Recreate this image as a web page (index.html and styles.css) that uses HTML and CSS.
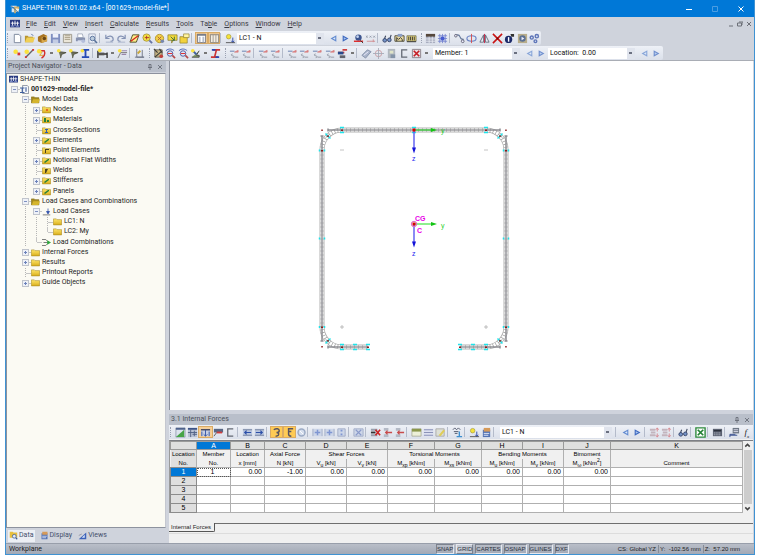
FILE: index.html
```html
<!DOCTYPE html>
<html lang="en">
<head>
<meta charset="utf-8">
<title>SHAPE-THIN</title>
<link rel="stylesheet" href="styles.css">
</head>
<body>
<svg class="defs" aria-hidden="true">
  <defs>
  <linearGradient id="fold" x1="0" y1="0" x2="0" y2="1"><stop offset="0" stop-color="#ffe66b"/><stop offset="1" stop-color="#d9ae1c"/></linearGradient>
  <symbol id="app" viewBox="0 0 12 12"><path d="M0 1h12v9H0z" fill="#293a80"/><path d="M1 5h10M3 3v5M6 2v6M9 3v5" stroke="#fff" stroke-width="1"/><path d="M1 8.500h4M7 8.500h4" stroke="#9fb1e8"/></symbol>
  <symbol id="applogo" viewBox="0 0 12 12"><path d="M1 2h7v2H1zM2 5h3v5H2z" fill="#d8e4ee"/><path d="M5 3h6v3H7v5H5z" fill="#d2b06a"/><path d="M7 5l4 1-1 4-3-1z" fill="#f4f0df"/><path d="M1 2l9 8" stroke="#466a8c"/></symbol>
  <symbol id="new" viewBox="0 0 12 12"><path d="M2.500 1.500h5l2 2v7h-7z" fill="#fff" stroke="#78849a"/></symbol>
  <symbol id="open" viewBox="0 0 12 12"><path d="M1 3h3l1 1h5v6H1z" fill="#b89530"/><path d="M3 5h9l-2 5H1z" fill="#f0cf55"/><path d="M8 1l2 2" stroke="#46649c"/></symbol>
  <symbol id="book" viewBox="0 0 12 12"><path d="M1 4l6-3 4 2v6l-6 2-4-2z" fill="#a87422"/><path d="M5 5l6-2v6l-6 2z" fill="#d9a94c"/><circle cx="8" cy="6" r="2" fill="#6a4716"/></symbol>
  <symbol id="save" viewBox="0 0 12 12"><path d="M1 1h10v10H1z" fill="#7f8fc0"/><path d="M3 1h6v4H3z" fill="#eef2fb"/><path d="M3 7h6v4H3z" fill="#c3cce4"/></symbol>
  <symbol id="list" viewBox="0 0 12 12"><path d="M1.500 1.500h9v9h-9z" fill="#ebe6d8" stroke="#9c988c"/><path d="M3 3h6M3 5h6M3 7h6" stroke="#a59d86"/></symbol>
  <symbol id="print" viewBox="0 0 12 12"><path d="M3 1h5l1 4H3z" fill="#fff" stroke="#8791a8" stroke-width=".7"/><path d="M1 5h10v4H1z" fill="#8792b0"/><path d="M3 8h6v3H3z" fill="#dde2ef"/><circle cx="9" cy="9" r="2" fill="#b4bedb"/></symbol>
  <symbol id="preview" viewBox="0 0 12 12"><path d="M2 1h7v10H2z" fill="#eef1f8" stroke="#8f99b2" stroke-width=".8"/><circle cx="6" cy="6" r="2.500" fill="#bcd" stroke="#56709a"/><path d="M8 8l3 3" stroke="#56709a" stroke-width="1.500"/></symbol>
  <symbol id="undo" viewBox="0 0 12 12"><path d="M2 2v4h4M2 6c3-4 8-3 8 1 0 2-2 2-3 2" fill="none" stroke="#8492b4" stroke-width="1.300"/><path d="M2 10h8" stroke="#a8b2cb"/></symbol>
  <symbol id="redo" viewBox="0 0 12 12"><path d="M10 2v4H6M10 6C7 2 2 3 2 7c0 2 2 2 3 2" fill="none" stroke="#8492b4" stroke-width="1.300"/><path d="M2 10h8" stroke="#a8b2cb"/></symbol>
  <symbol id="plane" viewBox="0 0 12 12"><path d="M4 2h7L8 10H1z" fill="#fff08a" stroke="#4d4d28"/><path d="M2 9l8-6" stroke="#d52020" stroke-width="1.300"/></symbol>
  <symbol id="zoomy" viewBox="0 0 12 12"><circle cx="5" cy="5" r="4" fill="#f3df45" stroke="#a08b2a" stroke-width=".8"/><path d="M3 5h5M5 3v4" stroke="#b03a2a"/><path d="M8 8l3 3" stroke="#6674a4" stroke-width="2"/></symbol>
  <symbol id="rot" viewBox="0 0 12 12"><circle cx="6" cy="6" r="4.500" fill="#f3cf45" stroke="#b0942c"/><path d="M4 4l4 4M8 4L4 8" stroke="#a8603f"/><circle cx="9" cy="9" r="2" fill="#7788b0"/></symbol>
  <symbol id="note" viewBox="0 0 12 12"><path d="M1 2h10v6H7l-2 3V8H1z" fill="#f2da3c" stroke="#7c7024" stroke-width=".7"/><path d="M4 4l4 4m0-4v4H5" stroke="#3d6a3f" fill="none"/></symbol>
  <symbol id="ypanel" viewBox="0 0 12 12"><path d="M1 4h8v7H1z" fill="#f2d23e" stroke="#8c7a28" stroke-width=".7"/><path d="M5 1h6v4H5z" fill="#fff5a2" stroke="#8c7a28" stroke-width=".7"/></symbol>
  <symbol id="win1" viewBox="0 0 12 12"><path d="M1.500 1.500h9v9h-9z" fill="#fff" stroke="#6e6e76"/><path d="M1 1h10v2H1z" fill="#777c88"/><path d="M3 4h2v6H3zM7 4h2v6H7z" fill="#b7bfce"/></symbol>
  <symbol id="win2" viewBox="0 0 12 12"><path d="M1.500 1.500h9v9h-9z" fill="#f2ede3" stroke="#88827a"/><path d="M1 2h10M4.500 2v8M7.500 2v8" stroke="#a39a8e"/></symbol>
  <symbol id="load" viewBox="0 0 12 12"><circle cx="4" cy="4" r="2.500" fill="#f4e23a" stroke="#9b8e28" stroke-width=".6"/><path d="M8.500 5v5M7 8.500l1.500 2 1.500-2" stroke="#2846a8" fill="none"/><path d="M1 10.500h10" stroke="#555"/></symbol>
  <symbol id="lt" viewBox="0 0 12 12"><path d="M8.500 3.500L4 6l4.500 2.500z" fill="#dbe9fb" stroke="#638bd0" stroke-width="1.200"/></symbol>
  <symbol id="gt" viewBox="0 0 12 12"><path d="M3.500 3.500L8 6 3.500 8.500z" fill="#a9c5ef" stroke="#3f6ac0" stroke-width="1.200"/></symbol>
  <symbol id="eye" viewBox="0 0 12 12"><circle cx="6" cy="5" r="3.500" fill="#3d558f"/><circle cx="5" cy="4" r="1.500" fill="#c2d3f0"/><path d="M1 9h10" stroke="#d22" stroke-width="1.500"/><path d="M8 8l3 3" stroke="#333"/></symbol>
  <symbol id="xxx" viewBox="0 0 12 12"><path d="M1 3l2 2m0-2L1 5m4-2l2 2m0-2L5 5m4-2l2 2m0-2L9 5" stroke="#8f96a6" stroke-width=".9"/><path d="M2 9h9M9 7v3" stroke="#d08c91"/></symbol>
  <symbol id="glasses" viewBox="0 0 12 12"><path d="M2 8l2-5M8 8l2-6" stroke="#3b465e" stroke-width="1.200"/><circle cx="3" cy="8" r="2" fill="#7493c8" stroke="#37456a"/><circle cx="8" cy="7.500" r="2" fill="#7493c8" stroke="#37456a"/></symbol>
  <symbol id="beamwin" viewBox="0 0 12 12"><path d="M1 3h10v6H1z" fill="#e8d9a0" stroke="#4e4b3a"/><path d="M3 9V5l2 2 2-2 2 2v2" fill="none" stroke="#333"/><path d="M4 1h5v3H4z" fill="#8b9ec6"/></symbol>
  <symbol id="beam2" viewBox="0 0 12 12"><path d="M1 3h10v6H1z" fill="#e4d480" stroke="#5c5a36" stroke-width=".7"/><path d="M3 4v4M5 4v4M7 4v4M9 4v4M1 9.500h10" stroke="#333"/></symbol>
  <symbol id="table" viewBox="0 0 12 12"><path d="M1 1h10v10H1z" fill="#a9aec0"/><path d="M1 1h10v3H1z" fill="#56483c"/><path d="M1 6.500h10M1 9h10M4.500 4v7M8 4v7" stroke="#eceef6" stroke-width=".8"/></symbol>
  <symbol id="gridi" viewBox="0 0 12 12"><path d="M1 3h10M1 6h10M1 9h10M3 1v10M6 1v10M9 1v10" stroke="#7382cf" stroke-width=".9"/><path d="M4 4h4v4H4z" fill="#465bd0"/></symbol>
  <symbol id="curve" viewBox="0 0 12 12"><path d="M1 2h3c4 0 1 5 6 5v3" fill="none" stroke="#667899" stroke-width="1.200"/><circle cx="2" cy="3" r="1.400" fill="#eef" stroke="#667"/><circle cx="9.500" cy="9" r="1.500" fill="#eef" stroke="#667"/></symbol>
  <symbol id="axis" viewBox="0 0 12 12"><ellipse cx="6" cy="6" rx="5" ry="3" fill="none" stroke="#6780c4" stroke-width="1.200"/><path d="M6 1v10" stroke="#d54b4b"/></symbol>
  <symbol id="mirror" viewBox="0 0 12 12"><path d="M5 2v8H1zM7 2v8h4z" fill="#e9edf5" stroke="#5a6272" stroke-width=".9"/><path d="M6 1v10" stroke="#c24"/></symbol>
  <symbol id="delx" viewBox="0 0 12 12"><path d="M1 1l10 10M11 1L1 11" stroke="#c81414" stroke-width="1.700"/><path d="M5 5h2v2H5z" fill="#700"/></symbol>
  <symbol id="info" viewBox="0 0 12 12"><circle cx="5" cy="7" r="4" fill="#1c2a6a"/><path d="M5 4.500v5" stroke="#fff" stroke-width="1.500"/><path d="M7 1h4v3H8z" fill="#333"/></symbol>
  <symbol id="photo" viewBox="0 0 12 12"><path d="M1 1h10v10H1z" fill="#b8ad8b"/><circle cx="6" cy="6" r="3.500" fill="#5b7093"/><path d="M5 4l3 2-3 2z" fill="#eef"/></symbol>
  <symbol id="gears" viewBox="0 0 12 12"><g fill="#d5def2" stroke="#5f76b8" stroke-width="1.500"><circle cx="3" cy="5" r="1.700"/><circle cx="8.500" cy="3.500" r="1.800"/><circle cx="7" cy="9" r="1.500"/></g></symbol>
  <symbol id="node" viewBox="0 0 12 12"><circle cx="4" cy="4" r="2.500" fill="#fae23e"/><path d="M6 5h3v3H6z" fill="#d43434"/></symbol>
  <symbol id="line" viewBox="0 0 12 12"><path d="M2 10l8-8" stroke="#666" stroke-width="1.500"/><circle cx="3" cy="4" r="2.500" fill="#fae23e"/><path d="M9 1h2v2H9zM1 9h2v2H1z" fill="#d43434"/></symbol>
  <symbol id="arc" viewBox="0 0 12 12"><path d="M3 3h6c2 4-1 7-3 8" fill="none" stroke="#d42d2d" stroke-width="1.600"/><circle cx="3.500" cy="3.500" r="2.500" fill="#fae23e"/><path d="M7 4L4 8h4" stroke="#dda020" fill="none"/></symbol>
  <symbol id="pt" viewBox="0 0 12 12"><path d="M3 4l8 1-5 2-1 4" fill="#6d705c" stroke="#505040"/><circle cx="3" cy="3" r="2" fill="#fae23e"/></symbol>
  <symbol id="ibeam" viewBox="0 0 12 12"><path d="M2 2h8M6 2v8M2 10h8" stroke="#2549b5" stroke-width="2"/><circle cx="2.500" cy="3" r="2" fill="#fae23e"/></symbol>
  <symbol id="dim" viewBox="0 0 12 12"><path d="M1 3v8M11 5v6M1 6.500h10" stroke="#333" stroke-width="1.500"/><path d="M1 5h7v3H1z" fill="#555"/><circle cx="3" cy="2.500" r="2" fill="#fae23e"/></symbol>
  <symbol id="comment" viewBox="0 0 12 12"><path d="M1 11l3-6h7" stroke="#777" fill="none"/><path d="M5 3h6M5 7h5" stroke="#98a" stroke-width="1.200"/><circle cx="3" cy="3" r="2" fill="#fae23e"/></symbol>
  <symbol id="ortho" viewBox="0 0 12 12"><path d="M3 1v9h8M9 2v8M1 10h10" fill="none" stroke="#6c7485"/><path d="M4 6l3-3" stroke="#c9a83a" stroke-width="2"/></symbol>
  <symbol id="calc" viewBox="0 0 12 12"><path d="M2 2h8v8H2z" fill="#c6b483" stroke="#6b665b"/><path d="M1 1l4 4M7 1l3 4M2 10l7-6" stroke="#3d3b38" stroke-width="1.300"/><circle cx="9" cy="9" r="2" fill="#c3413d"/></symbol>
  <symbol id="lens" viewBox="0 0 12 12"><path d="M1 3c3-3 7-2 9 0" fill="none" stroke="#3d58b2"/><circle cx="5.500" cy="6" r="3" fill="#dfe5f6" stroke="#4c5aa0"/><path d="M3 6h5" stroke="#d22"/><path d="M8 8l3 3" stroke="#b54848" stroke-width="1.700"/></symbol>
  <symbol id="sect" viewBox="0 0 12 12"><path d="M2 10h8V8H7l3-5" stroke="#444" fill="#87a06a"/><path d="M3 3l4 4" stroke="#3d5fa0" stroke-width="2"/><circle cx="3" cy="3" r="2" fill="#fae23e"/></symbol>
  <symbol id="stress" viewBox="0 0 12 12"><path d="M3 2h8M7 2L5 10M1 10h8" stroke="#c33" stroke-width="1.800"/><path d="M2 2h4M6 10h4" stroke="#2948b5" stroke-width="1.800"/></symbol>
  <symbol id="res" viewBox="0 0 12 12"><path d="M1 3.500h5" stroke="#7f93bb" stroke-width="1.300"/><path d="M6 4.500l4-2v2z" fill="#e58a8a" stroke="#d06a6a" stroke-width=".6"/><path d="M4 6.500c-2 0-2 2 0 2s2 2 0 2M6 10h4" fill="none" stroke="#8a8f9c" stroke-width=".9"/></symbol>
  <symbol id="clear" viewBox="0 0 12 12"><path d="M6 2h5M1 5h7" stroke="#cc3f3f" stroke-width="2"/><path d="M1 4h6v3H1z" fill="#27498c"/><path d="M3 8h6v3H3z" fill="#60636c"/></symbol>
  <symbol id="tag" viewBox="0 0 12 12"><path d="M1 8l6-6 4 2-6 7z" fill="#a9b4ca" stroke="#8390aa"/><path d="M3 8l5-4" stroke="#eef"/></symbol>
  <symbol id="target" viewBox="0 0 12 12"><circle cx="6" cy="6" r="3.500" fill="none" stroke="#c9a0a6"/><path d="M6 0v12M0 6h12" stroke="#a2a8b5" stroke-width=".9"/></symbol>
  <symbol id="copy" viewBox="0 0 12 12"><path d="M2 1h8v10H2z" fill="#b0b7bf"/><path d="M4 3h4v3H4z" fill="#dfe4c8"/><path d="M5 7h5v4H5z" fill="#8494a8"/></symbol>
  <symbol id="cshape" viewBox="0 0 12 12"><path d="M9 2H3v8h6" fill="none" stroke="#636873" stroke-width="1.400"/></symbol>
  <symbol id="selx" viewBox="0 0 12 12"><path d="M1.500 1.500h9v9h-9z" fill="#e9dfe4" stroke="#8a8088"/><path d="M3 3l6 6M9 3L3 9" stroke="#c51c24" stroke-width="1.800"/></symbol>
  <symbol id="chart" viewBox="0 0 12 12"><path d="M1 1h10v10H1z" fill="#dce3ee" stroke="#79839a" stroke-width=".7"/><path d="M1 11l9-8v8z" fill="#47a447"/><path d="M1 1h10v2H1z" fill="#4e628c"/></symbol>
  <symbol id="tabplus" viewBox="0 0 12 12"><path d="M1 1h10v10H1z" fill="#b8c1d4"/><path d="M1 2h10" stroke="#3d5387" stroke-width="2"/><path d="M1 6h10M4 3v8M8 4v6M6 8h5" stroke="#526385"/></symbol>
  <symbol id="tabbeam" viewBox="0 0 12 12"><path d="M1 2h10v8H1z" fill="#c6cfe4"/><path d="M1 3h10" stroke="#445" stroke-width="1.500"/><path d="M6 3v7M4 8l2 2 2-2M2 5v5M10 5v5" stroke="#3553a3" fill="none"/></symbol>
  <symbol id="loadtab" viewBox="0 0 12 12"><path d="M1 3l2-2 2 2 2-2 2 2M2 5h5M3 7h3" stroke="#4d5468" fill="none"/><path d="M8 5v5M5 10.500h6" stroke="#3c8fd0" stroke-width="1.500"/></symbol>
  <symbol id="redtab" viewBox="0 0 12 12"><path d="M1 2h10v4H1z" fill="#596784"/><path d="M4 6h6" stroke="#d13c3c" stroke-width="2"/><path d="M1 10l3-4" stroke="#555"/></symbol>
  <symbol id="tableft" viewBox="0 0 12 12"><path d="M1 2h10v8H1z" fill="#bac6df"/><path d="M1 3h10M1 9h10" stroke="#77839f"/><path d="M10 6H3M5 4L3 6l2 2" stroke="#2c4fa8" fill="none" stroke-width="1.300"/></symbol>
  <symbol id="tabright" viewBox="0 0 12 12"><path d="M1 2h10v8H1z" fill="#bac6df"/><path d="M1 3h10M1 9h10" stroke="#77839f"/><path d="M2 6h7M7 4l2 2-2 2" stroke="#2c4fa8" fill="none" stroke-width="1.300"/></symbol>
  <symbol id="hookr" viewBox="0 0 12 12"><path d="M3 3c3-2 6-1 6 1s-2 2-3 2c2 0 3 1 2 3-1 1-2 1-3 1" fill="none" stroke="#5a5560" stroke-width="1.600"/></symbol>
  <symbol id="hookc" viewBox="0 0 12 12"><path d="M10 2H5v3h3M5 5v3c0 2 2 2 3 2" fill="none" stroke="#5a5560" stroke-width="1.600"/></symbol>
  <symbol id="sync" viewBox="0 0 12 12"><circle cx="6" cy="6" r="3.800" fill="#d5deed" stroke="#9baac4" stroke-width="1.600"/><path d="M4 4l4 4" stroke="#fff"/></symbol>
  <symbol id="cellp" viewBox="0 0 12 12"><path d="M1 2h10v8H1z" fill="#cdd6e8"/><path d="M1 2v8M11 2v8" stroke="#a1acc6"/><path d="M3 6h6M6 3v6" stroke="#7f96d2" stroke-width="1.600"/></symbol>
  <symbol id="cellv" viewBox="0 0 12 12"><path d="M2 2h8v8H2z" fill="#cdd6e8" stroke="#a1acc6"/><path d="M6 3v2M6 7v2" stroke="#7f96d2" stroke-width="2"/></symbol>
  <symbol id="cellx" viewBox="0 0 12 12"><path d="M1 2h10v8H1z" fill="#cdd6e8" stroke="#a1acc6"/><path d="M3 3l6 6M9 3L3 9" stroke="#8a9aca" stroke-width="1.200"/></symbol>
  <symbol id="rowx" viewBox="0 0 12 12"><path d="M1 2h7v2H1zM1 8h7v2H1z" fill="#98a0ae"/><path d="M1 6h5" stroke="#333" stroke-width="2"/><path d="M6 3l5 6M11 3L6 9" stroke="#c92525" stroke-width="1.800"/></symbol>
  <symbol id="rowin" viewBox="0 0 12 12"><path d="M2 1h5v3H2zM2 8h5v3H2z" fill="#b4bac6"/><path d="M4 6h7M6 4L4 6l2 2" stroke="#c84c4c" fill="none" stroke-width="1.400"/></symbol>
  <symbol id="rowupd" viewBox="0 0 12 12"><path d="M1 2h6v2H1zM2 5h5v2H2zM1 8h6v2H1z" fill="#c3b4bd"/><path d="M9 1v4M7.500 3L9 1l1.500 2M9 7v4M7.500 9L9 11l1.500-2" stroke="#d88a90" fill="none"/></symbol>
  <symbol id="split" viewBox="0 0 12 12"><path d="M1 2h10v8H1z" fill="#edf0d8" stroke="#969a80" stroke-width=".7"/><path d="M1 2h10v3H1z" fill="#8b974b"/></symbol>
  <symbol id="tabg" viewBox="0 0 12 12"><path d="M1 2h10v8H1z" fill="#dde1f0"/><path d="M1 3h10M1 6h10M1 9h10" stroke="#8b93b8" stroke-width="1.300"/></symbol>
  <symbol id="edit" viewBox="0 0 12 12"><path d="M1 2h9v8H1z" fill="#dde0d6" stroke="#aaa"/><path d="M4 9l5-6 2 1-5 6z" fill="#e0cd58"/></symbol>
  <symbol id="excel" viewBox="0 0 12 12"><path d="M1 1h10v10H1z" fill="#fff" stroke="#2e8a3c" stroke-width="1.500"/><path d="M3 3l6 6M9 3L3 9" stroke="#238134" stroke-width="1.900"/></symbol>
  <symbol id="calculator" viewBox="0 0 12 12"><path d="M1 2h10v8H1z" fill="#5a6070"/><path d="M2 4h8" stroke="#2c313c" stroke-width="1.500"/><path d="M2 6.500h8M2 8.500h8" stroke="#cbd0da" stroke-dasharray="1 1"/></symbol>
  <symbol id="dbl" viewBox="0 0 12 12"><path d="M4 1h7v6H4z" fill="#6d7684"/><path d="M5 3h5M5 5h5" stroke="#dde"/><path d="M1 11V8h6M1 9h8" stroke="#334a8c" fill="none"/></symbol>
  <symbol id="folder" viewBox="0 0 12 12"><path d="M.5 2.500h4l1 1h6v7H.5z" fill="url(#fold)" stroke="#a98d25" stroke-width=".8"/></symbol>
  <symbol id="folderopen" viewBox="0 0 12 12"><path d="M.5 2.500h4l1 1h5v7H.5z" fill="#a88b1c" stroke="#7e6a18" stroke-width=".8"/><path d="M3 5.500h9l-2 5H1z" fill="#d5b52c"/></symbol>
  <symbol id="doc" viewBox="0 0 12 12"><path d="M3.500.5h6l2 2v9h-8z" fill="#f7f9fc" stroke="#6a7384"/><path d="M0 4h6M3 4v6M0 10h6M8 3v6" stroke="#3f5f9d" stroke-width="1.500"/></symbol>
  <symbol id="comb" viewBox="0 0 12 12"><path d="M0 2h5l3 3M0 10h5l3-3M2 6h6" fill="none" stroke="#555"/><path d="M7 3l5 3-5 3z" fill="#2ba83c"/></symbol>
  <symbol id="loadcase" viewBox="0 0 12 12"><path d="M8 2v7M6 6l2 3 2-3z" stroke="#2d4ea8" fill="#2d4ea8"/><path d="M1 10.500h10" stroke="#555"/></symbol>
  <symbol id="display" viewBox="0 0 12 12"><path d="M2 3h8v8H2z" fill="#5373b4"/><path d="M3 1h7v4H3z" fill="#d69a58"/><path d="M3 7h6M3 9h5" stroke="#e4eafa"/></symbol>
  <symbol id="views" viewBox="0 0 12 12"><path d="M1 11h10V2z" fill="#3c62b9"/><path d="M5 9l4-4v4z" fill="#d8e4fa"/><path d="M1 6l4-2" stroke="#889"/></symbol>
  <symbol id="data" viewBox="0 0 12 12"><path d="M1 1h4l1 1h5v7H1z" fill="#e7bf3e"/><circle cx="7" cy="7" r="2.500" fill="#dfeafa" stroke="#3a5b9d"/><path d="M9 9l2 2" stroke="#3a5b9d" stroke-width="1.500"/></symbol>
  </defs>
</svg>

<div class="window">
  <header class="titlebar">
    <svg class="ic"><use href="#applogo"/></svg>
    <h1>SHAPE-THIN 9.01.02 x64 - [001629-model-file*]</h1>
    <button class="winbtn" aria-label="Minimize"><svg viewBox="0 0 8 8"><path d="M1 4.500h6"/></svg></button>
    <button class="winbtn dim" aria-label="Maximize"><svg viewBox="0 0 8 8"><path d="M1.500 1.500h5v5h-5z"/></svg></button>
    <button class="winbtn" aria-label="Close"><svg viewBox="0 0 8 8"><path d="M1.500 1.500l5 5M6.500 1.500l-5 5"/></svg></button>
  </header>

  <nav class="menubar">
    <svg class="ic"><use href="#app"/></svg>
    <a href="#"><u>F</u>ile</a><a href="#"><u>E</u>dit</a><a href="#"><u>V</u>iew</a><a href="#"><u>I</u>nsert</a><a href="#"><u>C</u>alculate</a><a href="#"><u>R</u>esults</a><a href="#"><u>T</u>ools</a><a href="#">Ta<u>b</u>le</a><a href="#"><u>O</u>ptions</a><a href="#"><u>W</u>indow</a><a href="#"><u>H</u>elp</a>
    <span class="mdi"><button aria-label="Minimize document"><svg viewBox="0 0 6 6"><path d="M1 5h4"/></svg></button><button aria-label="Restore document"><svg viewBox="0 0 6 6"><path d="M.5 2h4v3h-4zM2 1h4v3"/></svg></button><button aria-label="Close document"><svg viewBox="0 0 6 6"><path d="M1 1l4 4M5 1L1 5"/></svg></button></span>
  </nav>

  <div class="toolbar" role="toolbar" aria-label="Standard">
    <i class="grip"></i>
    <div class="grp n7"><button><svg><use href="#new"/></svg></button><button><svg><use href="#open"/></svg></button><button><svg><use href="#book"/></svg></button><button><svg><use href="#save"/></svg></button><button><svg><use href="#list"/></svg></button><button><svg><use href="#print"/></svg></button><button><svg><use href="#preview"/></svg></button></div>
    <i class="sep"></i>
    <div class="grp n7"><button><svg><use href="#undo"/></svg></button><button><svg><use href="#redo"/></svg></button><button><svg><use href="#plane"/></svg></button><button><svg><use href="#zoomy"/></svg></button><button><svg><use href="#rot"/></svg></button><button><svg><use href="#note"/></svg></button><button><svg><use href="#ypanel"/></svg></button></div>
    <i class="sep"></i>
    <div class="grp n2"><button class="on"><svg><use href="#win1"/></svg></button><button class="on"><svg><use href="#win2"/></svg></button></div>
    <i class="sep"></i>
    <div class="grp n1"><button><svg><use href="#load"/></svg></button></div>
    <select class="combo" aria-label="Load case"><option>LC1 - N</option></select>
    <i class="gap"></i>
    <div class="grp n4"><button><svg><use href="#lt"/></svg></button><button><svg><use href="#gt"/></svg></button><button><svg><use href="#eye"/></svg></button><button><svg><use href="#xxx"/></svg></button></div>
    <i class="sep"></i>
    <div class="grp n3"><button><svg><use href="#glasses"/></svg></button><button><svg><use href="#beamwin"/></svg></button><button><svg><use href="#beam2"/></svg></button></div>
    <i class="grip wide"></i>
    <div class="grp n2"><button><svg><use href="#table"/></svg></button><button><svg><use href="#gridi"/></svg></button></div>
    <i class="sep"></i>
    <div class="grp n7"><button><svg><use href="#curve"/></svg></button><button><svg><use href="#axis"/></svg></button><button><svg><use href="#mirror"/></svg></button><button><svg><use href="#delx"/></svg></button><button><svg><use href="#info"/></svg></button><button><svg><use href="#photo"/></svg></button><button><svg><use href="#gears"/></svg></button></div>
  </div>

  <div class="toolbar last" role="toolbar" aria-label="Modelling">
    <i class="grip"></i>
    <div class="grp n3"><button><svg><use href="#node"/></svg></button><button><svg><use href="#line"/></svg></button><button><svg><use href="#arc"/></svg></button></div>
    <i class="drop"></i>
    <div class="grp n3"><button><svg><use href="#pt"/></svg></button><button><svg><use href="#pt"/></svg></button><button><svg><use href="#ibeam"/></svg></button></div>
    <i class="sep"></i>
    <div class="grp n1"><button><svg><use href="#dim"/></svg></button></div>
    <i class="drop"></i>
    <div class="grp n1"><button><svg><use href="#comment"/></svg></button></div>
    <i class="sep"></i>
    <div class="grp n1"><button><svg><use href="#ortho"/></svg></button></div>
    <i class="grip wide"></i>
    <div class="grp n4"><button><svg><use href="#calc"/></svg></button><button><svg><use href="#lens"/></svg></button><button><svg><use href="#lens"/></svg></button><button><svg><use href="#sect"/></svg></button></div>
    <i class="drop"></i>
    <div class="grp n1"><button><svg><use href="#stress"/></svg></button></div>
    <i class="grip wide"></i>
    <div class="grp n2"><button><svg><use href="#res"/></svg></button><button><svg><use href="#res"/></svg></button></div>
    <i class="sep"></i>
    <div class="grp n2"><button><svg><use href="#res"/></svg></button><button><svg><use href="#res"/></svg></button></div>
    <i class="sep"></i>
    <div class="grp n5"><button><svg><use href="#res"/></svg></button><button><svg><use href="#res"/></svg></button><button><svg><use href="#res"/></svg></button><button><svg><use href="#res"/></svg></button><button><svg><use href="#clear"/></svg></button></div>
    <i class="drop"></i>
    <i class="sep"></i>
    <div class="grp n5"><button><svg><use href="#tag"/></svg></button><button><svg><use href="#target"/></svg></button><button><svg><use href="#copy"/></svg></button><button><svg><use href="#cshape"/></svg></button><button><svg><use href="#selx"/></svg></button></div>
    <i class="drop"></i>
    <i class="gap"></i>
    <select class="combo" aria-label="Member"><option>Member: 1</option></select>
    <i class="gap"></i>
    <div class="grp n2 pale"><button><svg><use href="#lt"/></svg></button><button><svg><use href="#gt"/></svg></button></div>
    <select class="combo" aria-label="Location"><option>Location:&nbsp; 0.00</option></select>
    <i class="gap"></i>
    <div class="grp n2 pale"><button><svg><use href="#lt"/></svg></button><button><svg><use href="#gt"/></svg></button></div>
  </div>

  <main class="work">
    <aside class="navigator">
      <div class="panehead"><h2>Project Navigator - Data</h2><button aria-label="Pin"><svg viewBox="0 0 6 6"><path d="M1 3.500h4M2 3.500V.5h2v3M3 3.500V6"/></svg></button><button aria-label="Close pane"><svg viewBox="0 0 6 6"><path d="M1 1l4 4M5 1L1 5"/></svg></button></div>
      <div class="treebox">
      <ul class="tree">
        <li><svg><use href="#app"/></svg>SHAPE-THIN</li>
        <li><i class="x minus"></i><svg><use href="#doc"/></svg><b>001629-model-file*</b></li>
        <li><i></i><i class="x minus"></i><svg><use href="#folderopen"/></svg>Model Data</li>
        <li><i></i><i class="v"></i><i class="x plus"></i><svg class="mark red"><use href="#folder"/><circle cx="5" cy="5" r="1"/></svg>Nodes</li>
        <li><i></i><i class="v"></i><i class="x plus"></i><svg class="mark green"><use href="#folder"/><path d="M2 3h2v4H2zM5 5h2v2H5z"/></svg>Materials</li>
        <li><i></i><i class="v"></i><i class="t"></i><svg class="mark blue"><use href="#folder"/><path d="M3 3h3v1H5v2h1v1H3V6h1V4H3z"/></svg>Cross-Sections</li>
        <li><i></i><i class="v"></i><i class="x plus"></i><svg class="mark green"><use href="#folder"/><path d="M2 6l4-3h1v1L3 7z"/></svg>Elements</li>
        <li><i></i><i class="v"></i><i class="t"></i><svg class="mark dark"><use href="#folder"/><path d="M3 3h4v1H4v3H3z"/></svg>Point Elements</li>
        <li><i></i><i class="v"></i><i class="x plus"></i><svg class="mark green"><use href="#folder"/><path d="M2 6l4-3h1v1L3 7z"/></svg>Notional Flat Widths</li>
        <li><i></i><i class="v"></i><i class="t"></i><svg class="mark dark"><use href="#folder"/><path d="M3 3h3L4 7H3z"/></svg>Welds</li>
        <li><i></i><i class="v"></i><i class="x plus"></i><svg class="mark green"><use href="#folder"/><path d="M2 6l4-3h1v1L3 7z"/></svg>Stiffeners</li>
        <li><i></i><i class="v"></i><i class="x plus"></i><svg class="mark green"><use href="#folder"/><path d="M2 6l4-3h1v1L3 7z"/></svg>Panels</li>
        <li><i></i><i class="x minus"></i><svg><use href="#folderopen"/></svg>Load Cases and Combinations</li>
        <li><i></i><i class="v"></i><i class="x minus"></i><svg><use href="#loadcase"/></svg>Load Cases</li>
        <li><i></i><i class="v"></i><i class="v"></i><i class="t"></i><svg><use href="#folder"/></svg>LC1: N</li>
        <li><i></i><i class="v"></i><i class="v"></i><i class="l"></i><svg><use href="#folder"/></svg>LC2: My</li>
        <li><i></i><i class="v"></i><i class="l"></i><svg><use href="#comb"/></svg>Load Combinations</li>
        <li><i></i><i class="x plus"></i><svg><use href="#folder"/></svg>Internal Forces</li>
        <li><i></i><i class="x plus"></i><svg><use href="#folder"/></svg>Results</li>
        <li><i></i><i class="t"></i><svg><use href="#folder"/></svg>Printout Reports</li>
        <li><i></i><i class="x plus"></i><svg><use href="#folder"/></svg>Guide Objects</li>
      </ul>
      </div>
      <div class="navtabs"><button class="active"><svg><use href="#data"/></svg>Data</button><button><svg><use href="#display"/></svg>Display</button><button><svg><use href="#views"/></svg>Views</button></div>
    </aside>

    <section class="content">
      <div class="canvas">
        <svg viewBox="170 61 583 348" role="img" aria-label="Cross-section">
          <defs>
            <g id="cm"><path d="M-2 -2.500h4M-2 2.500h4" stroke="#1fe3ea" stroke-width="1.500"/></g>
            <g id="cv"><path d="M-2.500 -1v2M2.500 -1v2" stroke="#1fe3ea" stroke-width="1.500"/></g>
            <g id="corner">
              <path d="M322 150A20 20 0 0 1 342 129.500" fill="none" stroke="#aaa" stroke-width="5"/>
              <path d="M322 150A20 20 0 0 1 342 129.500" fill="none" stroke="#fff" stroke-width="3.600"/>
              <path d="M322 150A20 20 0 0 1 342 129.500" fill="none" stroke="#999" stroke-width="4" stroke-dasharray=".7 2.300"/>
              <path d="M322 150V135.500M320.500 135.500h3M342 129.500H328M328 128v3" stroke="#8d8d92" stroke-width="1.500"/>
              <path d="M325.500 133l5 5" stroke="#1fe3ea" stroke-width="1.500"/><path d="M329 134l-3 3" stroke="#777"/>
              <path d="M321.300 129h1.500v1.500h-1.500zM327.300 135h1.500v1.500h-1.500z" fill="#8b1c1c"/>
            </g>
          </defs>
          <g class="band">
            <path d="M342 129.500H486M322 150V327M506 150V327M342 346.500H368M486 346.500H460"/>
            <path class="inner" d="M342 129.500H486M322 150V327M506 150V327M342 346.500H368M486 346.500H460"/>
            <path class="dots" d="M342 129.500H486M322 150V327M506 150V327M342 346.500H368M486 346.500H460"/>
            <path class="axis" d="M342 129.500H486M322 150V327M506 150V327M342 346.500H368M486 346.500H460"/>
          </g>
          <use href="#corner"/>
          <use href="#corner" transform="matrix(-1 0 0 1 828 0)"/>
          <use href="#corner" transform="matrix(1 0 0 -1 0 476)"/>
          <use href="#corner" transform="matrix(-1 0 0 -1 828 476)"/>
          <use href="#cm" x="342" y="129.500"/><use href="#cm" x="414" y="129.500"/><use href="#cm" x="486" y="129.500"/>
          <use href="#cm" x="342" y="346.500"/><use href="#cm" x="355" y="346.500"/><use href="#cm" x="368" y="346.500"/>
          <use href="#cm" x="460" y="346.500"/><use href="#cm" x="473" y="346.500"/><use href="#cm" x="486" y="346.500"/>
          <use href="#cv" x="322" y="150"/><use href="#cv" x="322" y="238"/><use href="#cv" x="322" y="326.500"/>
          <use href="#cv" x="506" y="150"/><use href="#cv" x="506" y="238"/><use href="#cv" x="506" y="326.500"/>
          <path d="M341 129h2v1.500h-2zM485 129h2v1.500h-2zM321 149.500h2v1.500h-2zM505 149.500h2v1.500h-2zM321 326h2v1.500h-2zM505 326h2v1.500h-2zM341 346h2v1.500h-2zM485 346h2v1.500h-2zM367 346h2v1.500h-2zM459 346h2v1.500h-2z" fill="#8b1c1c"/>
          <path d="M340 149.500h4M484 149.500h4" stroke="#c4c4c4"/>
          <path d="M340 326.500h4M342 324.500v4M484 326.500h4M486 324.500v4" stroke="#a8a8a8" stroke-width=".7"/>
          <path d="M414 130v19M414 223v19" stroke="#5a5af0" stroke-width="1.400"/>
          <path d="M412 147h4l-2 6zM412 241h4l-2 6z" fill="#1212d8"/>
          <path d="M415 129.500h18M415 223.500h18" stroke="#1fe01f" stroke-width="1.200"/>
          <path d="M431 127.500v4l6-2zM431 221.500v4l6-2z" fill="#14c414"/>
          <circle cx="414" cy="223.500" r="2.700" fill="none" stroke="#e06ac8"/>
          <path d="M412.500 128h3v3h-3zM412.500 222h3v3h-3z" fill="#d80000"/>
          <g class="lab"><text class="y" x="441" y="132">y</text><text class="y" x="441" y="227">y</text><text class="z" x="412" y="160">z</text><text class="z" x="412" y="255">z</text><text class="c" x="415" y="220">CG</text><text class="c" x="417" y="232">C</text></g>
        </svg>
      </div>

      <div class="tablepane">
        <div class="panehead"><h2>3.1 Internal Forces</h2><button aria-label="Pin"><svg viewBox="0 0 6 6"><path d="M1 3.500h4M2 3.500V.5h2v3M3 3.500V6"/></svg></button><button aria-label="Close pane"><svg viewBox="0 0 6 6"><path d="M1 1l4 4M5 1L1 5"/></svg></button></div>
        <div class="toolbar" role="toolbar" aria-label="Table">
          <i class="grip"></i>
          <div class="grp n5"><button><svg><use href="#chart"/></svg></button><button><svg><use href="#tabplus"/></svg></button><button class="on"><svg><use href="#tabbeam"/></svg></button><button><svg><use href="#redtab"/></svg></button><button><svg><use href="#cshape"/></svg></button></div>
          <i class="sep"></i>
          <div class="grp n2"><button><svg><use href="#tableft"/></svg></button><button><svg><use href="#tabright"/></svg></button></div>
          <i class="sep"></i>
          <div class="grp n3"><button class="on hot"><svg><use href="#hookr"/></svg></button><button class="on hot"><svg><use href="#hookc"/></svg></button><button><svg><use href="#sync"/></svg></button></div>
          <i class="sep"></i>
          <div class="grp n3"><button><svg><use href="#cellp"/></svg></button><button><svg><use href="#cellp"/></svg></button><button><svg><use href="#cellv"/></svg></button></div>
          <i class="sep"></i>
          <div class="grp n1"><button><svg><use href="#cellx"/></svg></button></div>
          <i class="sep"></i>
          <div class="grp n3"><button><svg><use href="#rowx"/></svg></button><button><svg><use href="#rowin"/></svg></button><button><svg><use href="#rowin"/></svg></button></div>
          <i class="sep"></i>
          <div class="grp n3"><button><svg><use href="#split"/></svg></button><button><svg><use href="#tabg"/></svg></button><button><svg><use href="#edit"/></svg></button></div>
          <i class="sep"></i>
          <div class="grp n1"><button><svg><use href="#loadtab"/></svg></button></div>
          <i class="sep"></i>
          <div class="grp n2"><button><svg><use href="#load"/></svg></button><button><svg><use href="#display"/></svg></button></div>
          <i class="sep"></i>
          <i class="gap"></i>
          <select class="combo long" aria-label="Table load case"><option>LC1 - N</option></select>
          <i class="gap"></i>
          <i class="sep"></i>
          <div class="grp n2"><button><svg><use href="#lt"/></svg></button><button><svg><use href="#gt"/></svg></button></div>
          <i class="sep"></i>
          <div class="grp n2"><button><svg><use href="#rowupd"/></svg></button><button><svg><use href="#rowupd"/></svg></button></div>
          <i class="sep"></i>
          <div class="grp n1"><button><svg><use href="#glasses"/></svg></button></div>
          <i class="sep"></i>
          <div class="grp n1"><button><svg><use href="#excel"/></svg></button></div>
          <i class="sep"></i>
          <div class="grp n1"><button><svg><use href="#calculator"/></svg></button></div>
          <i class="sep"></i>
          <div class="grp n2"><button><svg><use href="#dbl"/></svg></button><button class="fx"><span>f<sub>x</sub></span></button></div>
        </div>
        <div class="sheet">
          <table>
            <colgroup><col class="w0"><col class="w1"><col class="w1"><col class="w2"><col class="w2"><col class="w2"><col class="w3"><col class="w3"><col class="w2"><col class="w2"><col class="w3"><col></colgroup>
            <thead>
              <tr class="letters"><th></th><th class="sel">A</th><th>B</th><th>C</th><th>D</th><th>E</th><th>F</th><th>G</th><th>H</th><th>I</th><th>J</th><th>K</th></tr>
              <tr class="names"><th class="side">Location</th><th>Member</th><th>Location</th><th>Axial Force</th><th colspan="2">Shear Forces</th><th colspan="2">Torsional Moments</th><th colspan="2">Bending Moments</th><th>Bimoment</th><th></th></tr>
              <tr class="units"><th class="side">No.</th><th>No.</th><th>x [mm]</th><th>N [kN]</th><th>V<sub>u</sub> [kN]</th><th>V<sub>v</sub> [kN]</th><th>M<sub>xp</sub> [kNm]</th><th>M<sub>xs</sub> [kNm]</th><th>M<sub>u</sub> [kNm]</th><th>M<sub>v</sub> [kNm]</th><th>M<sub>ω</sub> [kNm<sup>2</sup>]</th><th>Comment</th></tr>
            </thead>
            <tbody>
              <tr><th class="sel">1</th><td class="cur">1</td><td>0.00</td><td>-1.00</td><td>0.00</td><td>0.00</td><td>0.00</td><td>0.00</td><td>0.00</td><td>0.00</td><td>0.00</td><td></td></tr>
              <tr><th>2</th><td></td><td></td><td></td><td></td><td></td><td></td><td></td><td></td><td></td><td></td><td></td></tr>
              <tr><th>3</th><td></td><td></td><td></td><td></td><td></td><td></td><td></td><td></td><td></td><td></td><td></td></tr>
              <tr><th>4</th><td></td><td></td><td></td><td></td><td></td><td></td><td></td><td></td><td></td><td></td><td></td></tr>
              <tr><th>5</th><td></td><td></td><td></td><td></td><td></td><td></td><td></td><td></td><td></td><td></td><td></td></tr>
            </tbody>
          </table>
          <div class="scroll"><svg viewBox="0 0 8 8"><path d="M2 5l2-2 2 2"/></svg><i></i><svg viewBox="0 0 8 8"><path d="M2 3l2 2 2-2"/></svg></div>
        </div>
        <div class="sheettabs"><button>Internal Forces</button></div>
      </div>
    </section>
  </main>

  <footer class="status">
    <span class="msg">Workplane</span>
    <button>SNAP</button><button class="off">GRID</button><button>CARTES</button><button>OSNAP</button><button>GLINES</button><button>DXF</button>
    <span class="coords"><span>CS: Global YZ</span><span>Y:&nbsp; -102.56 mm</span><span>Z:&nbsp; 57.20 mm</span></span>
  </footer>
</div>
</body>
</html>
```
FILE: styles.css
```css
* { box-sizing: border-box; }
body {
  margin: 0;
  padding: 0 5px;
  height: 100vh;
  background: #fff;
  font: 7px/9px Roboto, "Liberation Sans", sans-serif;
  color: #1e1e1e;
}
h1, h2, ul { margin: 0; padding: 0; font: inherit; }
button { border: 0; padding: 0; margin: 0; background: none; font: inherit; color: inherit; }
a { color: inherit; text-decoration: none; }
.defs { position: absolute; width: 0; height: 0; }

.window {
  height: 100%;
  display: flex;
  flex-direction: column;
  background: #cfd3dc;
  border: 1px solid #3f92d2;
  border-top: 0;
}

.titlebar {
  height: 17px;
  display: flex;
  align-items: center;
  background: #0078d7;
  color: #fff;
  padding-left: 4px;
}
.titlebar .ic { width: 10px; height: 10px; margin-right: 2px; }
.titlebar h1 { flex: 1; }
.winbtn { width: 26px; height: 17px; display: grid; place-items: center; }
.winbtn svg { width: 8px; height: 8px; fill: none; stroke: #fff; }
.winbtn.dim svg { stroke: #4b9de2; }

.menubar {
  height: 14px;
  display: flex;
  align-items: center;
  gap: 7px;
  padding: 0 2px 0 4px;
  color: #3a3a44;
}
.menubar .ic { width: 10px; height: 10px; margin-right: -1px; }
.mdi { margin-left: auto; display: flex; gap: 3px; }
.mdi svg { display: block; width: 6px; height: 6px; fill: none; stroke: #6d7078; }

.toolbar {
  height: 14px;
  display: flex;
  align-items: center;
  align-self: flex-start;
  margin-bottom: 1px;
  background: linear-gradient(#eef1f7, #dbe0ea);
  border-radius: 0 2px 2px 0;
}
.toolbar.last { margin-bottom: 0; }
.grip { width: 4px; height: 10px; border-left: 1px dotted #9aa1b2; margin-left: 1px; flex: none; }
.grip.wide { margin-left: 3px; width: 3px; }
.sep { width: 4px; height: 10px; border-left: 1px solid #b4bbca; flex: none; }
.gap { width: 3px; flex: none; }
.drop { width: 7px; height: 2px; background: linear-gradient(#777, #777) center / 3px 2px no-repeat; flex: none; }
.grp { display: flex; flex: none; }
.grp button { flex: 1; height: 12px; min-width: 0; display: grid; place-items: center; }
.grp svg { width: 11px; height: 11px; }
.n1 { width: 13px; } .n2 { width: 25px; } .n3 { width: 37px; } .n4 { width: 50px; }
.n5 { width: 63px; } .n7 { width: 88px; }
.pale { opacity: .7; }
.grp .on { background: #f8cf94; border: 1px solid #d9ab66; }
.grp .hot { background: #ffcb55; }
.fx { font: italic 9px/9px "Liberation Serif", serif; }
.combo {
  appearance: none;
  width: 87px;
  height: 11px;
  border: 0;
  border-radius: 0;
  padding: 0 2px;
  background: linear-gradient(#6b7080, #6b7080) calc(100% - 3px) 50% / 3px 2px no-repeat, linear-gradient(90deg, #fff calc(100% - 8px), #e0e4ed 0);
  font: inherit;
  color: #111;
}
.combo.long { flex: 1; min-width: 60px; }

.work { flex: 1; min-height: 0; display: flex; border-top: 1px solid #a9adb5; }
.panehead {
  height: 11px;
  display: flex;
  align-items: center;
  gap: 4px;
  padding: 0 3px 0 2px;
  background: #b9bfca;
  color: #4b4f59;
}
.panehead h2 { flex: 1; }
.panehead svg { display: block; width: 6px; height: 6px; fill: none; stroke: #5f6470; stroke-width: .8; }

.navigator { width: 160px; flex: none; display: flex; flex-direction: column; }
.treebox { flex: 1; margin-top: 1px; border: 1px solid #8d929e; border-right-color: #c4c7cf; background: #fbfaf3; padding-left: 2px; }
.tree { list-style: none; display: grid; grid-template-rows: repeat(21, 1fr); height: 214px; }
.tree li { display: flex; align-items: center; min-height: 0; white-space: nowrap; }
.tree li > i { width: 11px; align-self: stretch; flex: none; display: block; }
.tree svg { width: 9px; height: 9px; flex: none; margin: 0 2px 0 0; }
.tree .v { background: repeating-linear-gradient(#b5b5b5 0 1px, transparent 1px 2px) 5px 0 / 1px 100% no-repeat; }
.tree .t { background: repeating-linear-gradient(#b5b5b5 0 1px, transparent 1px 2px) 5px 0 / 1px 100% no-repeat, linear-gradient(#c5c5c5, #c5c5c5) 6px 5px / 5px 1px no-repeat; }
.tree .l { background: linear-gradient(#c5c5c5, #c5c5c5) 5px 0 / 1px 5px no-repeat, linear-gradient(#c5c5c5, #c5c5c5) 6px 5px / 5px 1px no-repeat; }
.tree .x {
  background:
    linear-gradient(#7d90c0, #7d90c0) 4px 5px / 3px 1px no-repeat,
    linear-gradient(#eef1f7, #eef1f7) 3px 3px / 5px 5px no-repeat,
    linear-gradient(#c0c4cc, #c0c4cc) 2px 2px / 7px 7px no-repeat,
    linear-gradient(#c5c5c5, #c5c5c5) 9px 5px / 2px 1px no-repeat;
}
.tree .plus {
  background:
    linear-gradient(#6c82ba, #6c82ba) 4px 5px / 3px 1px no-repeat,
    linear-gradient(#6c82ba, #6c82ba) 5px 4px / 1px 3px no-repeat,
    linear-gradient(#eef1f7, #eef1f7) 3px 3px / 5px 5px no-repeat,
    linear-gradient(#c0c4cc, #c0c4cc) 2px 2px / 7px 7px no-repeat,
    linear-gradient(#c5c5c5, #c5c5c5) 9px 5px / 2px 1px no-repeat;
}
.mark.red { fill: #e04a1c; } .mark.green { fill: #25803a; } .mark.blue { fill: #2f5bb0; } .mark.dark { fill: #4a4320; }
.navtabs { height: 15px; display: flex; align-items: center; gap: 4px; padding-left: 2px; color: #44506c; }
.navtabs button { display: flex; align-items: center; gap: 1px; height: 12px; padding: 0 1px; }
.navtabs .active { background: #eceff4; }
.navtabs svg { width: 9px; height: 9px; }

.content { flex: 1; min-width: 0; margin: 0 1px 0 3px; display: flex; flex-direction: column; }
.canvas { flex: 1; min-height: 0; background: #fff; border-left: 1px solid #8d929e; }
.canvas svg { display: block; width: 100%; height: 100%; }
.band path { fill: none; stroke: #b4b4b4; stroke-width: 5; }
.band .inner { stroke: #e6e6e6; stroke-width: 3.6; }
.band .dots { stroke: #9a9a9a; stroke-width: 3; stroke-dasharray: 1 3; }
.band .axis { stroke: #a2a2a7; stroke-width: 1.6; }
.lab { font: 7px "Liberation Sans", sans-serif; }
.lab .y { fill: #1fd01f; } .lab .z { fill: #2a2af0; } .lab .c { fill: #e800e8; font-weight: bold; }

.tablepane { margin-top: 4px; background: #f0f0f0; display: flex; flex-direction: column; }
.tablepane .toolbar { align-self: stretch; border-radius: 0; }
.sheet { display: flex; border-top: 1px solid #7d7f85; border-left: 1px solid #9a9a9a; font: 7px/9px "Liberation Sans", sans-serif; color: #000; }
table { flex: 1; width: 0; table-layout: fixed; border-collapse: collapse; }
.w0 { width: 26px; } .w1 { width: 34px; } .w2 { width: 41px; } .w3 { width: 47px; }
th, td { padding: 0; height: 9px; line-height: 8px; white-space: nowrap; font-weight: normal; }
th { background: #f0f0f0; text-align: center; }
td { background: #fff; text-align: right; padding-right: 2px; border: 1px solid #b0b0b0; }
.letters th { height: 8px; line-height: 7px; background: #dfdfdf; border: 1px solid #9a9a9a; }
.names th, .units th { border-right: 1px solid #b0b0b0; font-size: 6px; }
tbody th { background: #dfdfdf; border: 1px solid #8c8c8c; }
th.side { background: #dfdfdf; }
.letters .sel, tbody .sel { background: #0078d7; color: #fff; }
td.cur { text-align: center; outline: 1px dotted #555; outline-offset: -1px; }
sub, sup { font-size: 5px; line-height: 0; }
.scroll { width: 10px; display: flex; flex-direction: column; background: #f0f0f0; }
.scroll i { flex: 1; background: #cdcdcd; margin: 0 1px; }
.scroll svg { width: 9px; height: 9px; fill: none; stroke: #444; stroke-width: 1.300; }
.sheettabs { margin-top: 10px; height: 20px; border-top: 1px solid #6f6f6f; font: 6px/8px "Liberation Sans", sans-serif; background: linear-gradient(#dcdcdc, #dcdcdc) 0 9px / 100% 1px no-repeat; }
.sheettabs button { display: block; height: 9px; margin-top: -1px; padding: 0 3px 0 2px; background: #f0f0f0; border-right: 1px solid #555; border-bottom: 1px solid #555; border-radius: 0 0 2px 0; }

.status {
  height: 11px;
  display: flex;
  align-items: center;
  gap: 2px;
  padding: 0 14px 0 3px;
  background: linear-gradient(#b9bec8, #a2a9b6);
  border-top: 1px solid #989eaa;
}
.msg { width: 425px; flex: 0 1 auto; }
.status button { height: 10px; color: #2c323e; border: 1px solid #7c828e; border-right-color: #e6e8ee; border-bottom-color: #e6e8ee; font: 6px/8px "Liberation Sans", sans-serif; }
.status .off { border-color: #e6e8ee #7c828e #7c828e #e6e8ee; background: #c4c9d2; }
.coords { margin-left: auto; display: flex; gap: 2px; font: 6px/8px "Liberation Sans", sans-serif; white-space: nowrap; }
.coords span + span { border-left: 1px solid #868c98; padding-left: 1px; }
```
